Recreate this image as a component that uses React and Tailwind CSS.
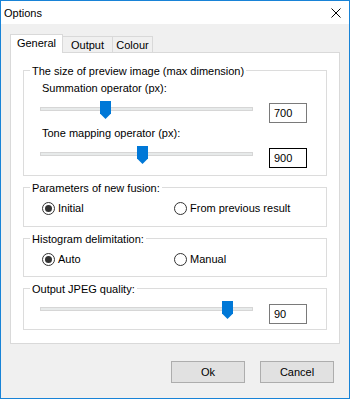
import React from "react";

function Thumb({ pos }) {
  return (
    <svg
      className={`absolute top-0 ${pos}`}
      width="11"
      height="18"
      viewBox="0 0 11 18"
    >
      <path d="M0 0H11V12.5L5.5 18L0 12.5Z" fill="#0078d7" />
    </svg>
  );
}

function SliderRow({ pos, value, focused = false, boxTop = "mt-[2px]" }) {
  return (
    <div className="flex items-start">
      <div className="relative ml-[16px] h-[18px] w-[213px]">
        <div className="mt-[6px] h-[4px] w-full border border-[#d6d6d6] bg-[#e7eaea]" />
        <Thumb pos={pos} />
      </div>
      <div
        className={`ml-[16px] ${boxTop} flex h-[20px] w-[38px] items-center border bg-white pl-[4px] ${
          focused ? "border-[#000]" : "border-[#7a7a7a]"
        }`}
      >
        {value}
      </div>
    </div>
  );
}

function Radio({ label, checked = false, width = "" }) {
  return (
    <div className={`flex items-center ${width}`}>
      <span className="flex h-[13px] w-[13px] items-center justify-center rounded-full border border-[#333]">
        {checked && <span className="h-[7px] w-[7px] rounded-full bg-[#333]" />}
      </span>
      <span className="ml-[3px]">{label}</span>
    </div>
  );
}

function Group({ title, className = "", children }) {
  return (
    <div className={`mx-[12px] border border-[#dcdcdc] ${className}`}>
      <div className="-mt-[7px] ml-[6px] w-fit bg-white px-[2px] leading-[14px]">
        {title}
      </div>
      {children}
    </div>
  );
}

export default function App() {
  return (
    <div className="flex h-[399px] w-[350px] flex-col border border-[#1883d7] bg-white font-['Liberation_Sans',Arial,sans-serif] text-[11px] leading-[14px] text-black">
      {/* title bar */}
      <div className="flex h-[23px] items-center justify-between pl-[3px] pr-[8px]">
        <span className="text-[11px]">Options</span>
        <svg width="10" height="10" viewBox="0 0 10 10">
          <path d="M0.5 0.5L9.5 9.5M9.5 0.5L0.5 9.5" stroke="#000" strokeWidth="1" />
        </svg>
      </div>

      <div className="flex flex-1 flex-col bg-[#f0f0f0] px-[9px]">
        {/* tabs */}
        <div className="flex h-[28px] items-end">
          <div className="relative z-10 -mb-px flex h-[19px] w-[53px] items-center justify-center border border-b-0 border-[#d9d9d9] bg-white pb-[2px]">
            General
          </div>
          <div className="flex h-[16px] w-[50px] items-center justify-center border border-b-0 border-l-0 border-[#d9d9d9]">
            Output
          </div>
          <div className="flex h-[16px] w-[40px] items-center justify-center border border-b-0 border-l-0 border-[#d9d9d9]">
            Colour
          </div>
        </div>

        {/* panel */}
        <div className="flex h-[292px] flex-col border border-[#d9d9d9] bg-white">
          <Group title="The size of preview image (max dimension)" className="mt-[17px] pb-[7px]">
            <div className="mt-[3px] pl-[18px]">Summation operator (px):</div>
            <div className="mt-[6px]">
              <SliderRow pos="left-[60px]" value="700" />
            </div>
            <div className="mt-[3px] pl-[18px]">Tone mapping operator (px):</div>
            <div className="mt-[6px]">
              <SliderRow pos="left-[97px]" value="900" focused />
            </div>
          </Group>

          <Group title="Parameters of new fusion:" className="mt-[11px] pb-[11px]">
            <div className="mt-[6px] flex h-[14px] items-center pl-[18px]">
              <Radio label="Initial" checked width="w-[132px]" />
              <Radio label="From previous result" />
            </div>
          </Group>

          <Group title="Histogram delimitation:" className="mt-[11px] pb-[10px]">
            <div className="mt-[6px] flex h-[14px] items-center pl-[18px]">
              <Radio label="Auto" checked width="w-[132px]" />
              <Radio label="Manual" />
            </div>
          </Group>

          <Group title="Output JPEG quality:" className="mt-[11px] pb-[5px]">
            <div className="mt-[5px]">
              <SliderRow pos="left-[182px]" value="90" boxTop="mt-[3px]" />
            </div>
          </Group>
        </div>

        {/* buttons */}
        <div className="mt-[17px] flex justify-end gap-[15px] pr-[6px]">
          <button className="h-[22px] w-[74px] border border-[#adadad] bg-[#e1e1e1]">Ok</button>
          <button className="h-[22px] w-[74px] border border-[#adadad] bg-[#e1e1e1]">Cancel</button>
        </div>
      </div>
    </div>
  );
}
